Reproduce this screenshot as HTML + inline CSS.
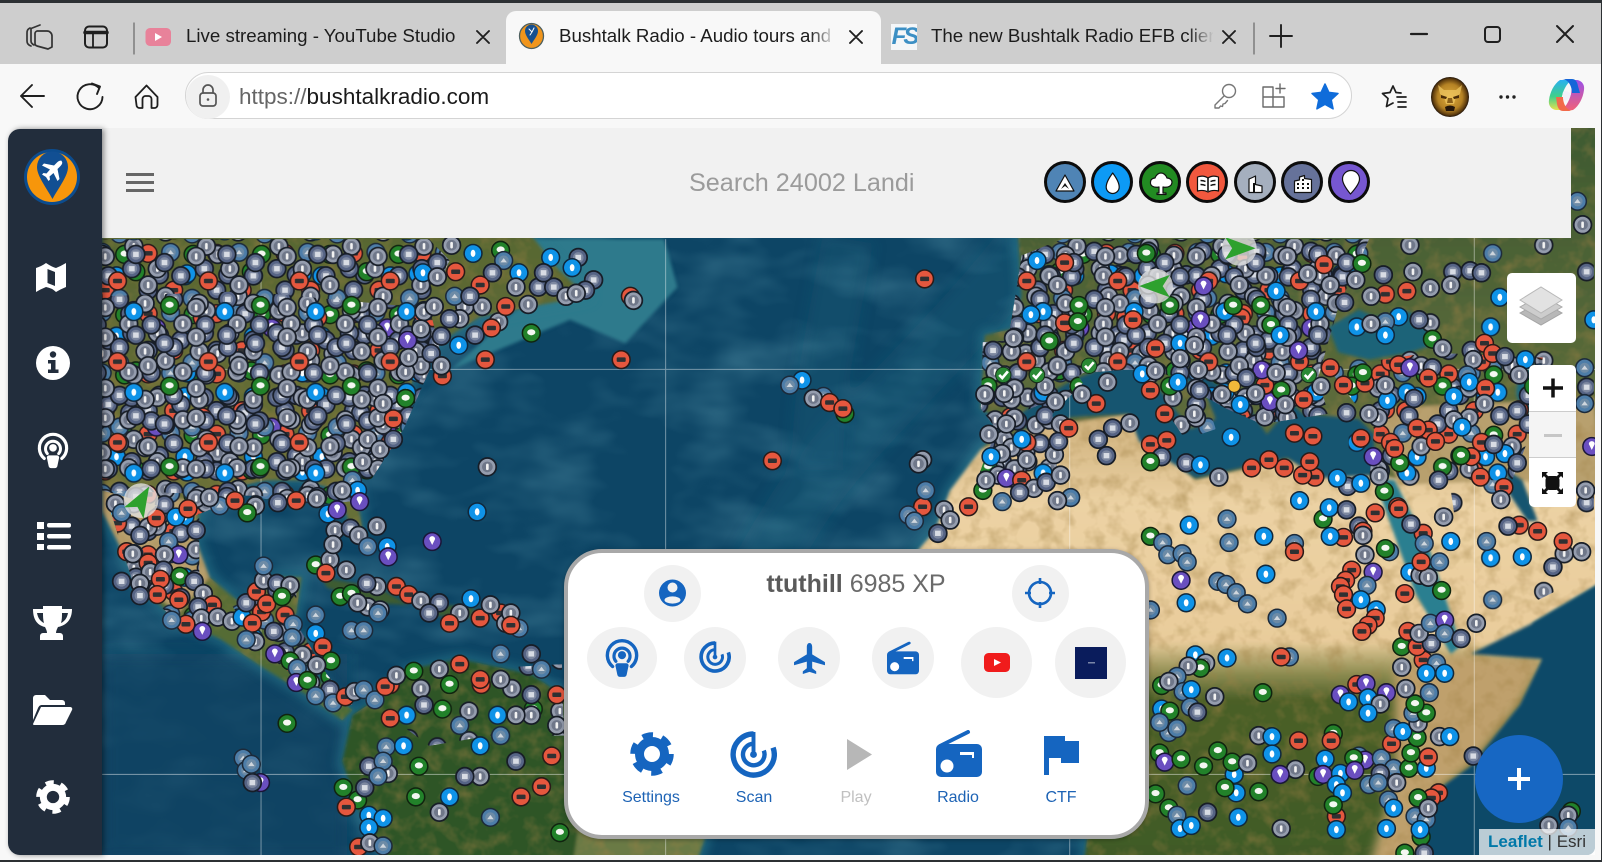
<!DOCTYPE html>
<html lang="en">
<head>
<meta charset="utf-8">
<title>Bushtalk Radio - Audio tours and</title>
<style>
html,body{margin:0;padding:0;width:1602px;height:862px;overflow:hidden;background:#2c3033;font-family:"Liberation Sans",sans-serif}
.a{position:absolute}
#win{left:0;top:3px;width:1601px;height:857px;background:#f8f8f8;border-radius:9px 9px 0 0;overflow:hidden}
#tabs{left:0;top:0;width:1601px;height:61px;background:#cecece}
#active{left:506px;top:8px;width:375px;height:53px;background:#f8f8f8;border-radius:10px 10px 0 0}
.tt{font-size:18.7px;color:#1c1c1c;white-space:nowrap;overflow:hidden;line-height:24px;top:21px}
#addr{left:185px;top:72px;width:1167px;height:47px;background:#fff;border:1.5px solid #d4d4d4;border-radius:25px;box-sizing:border-box}
#url{left:239px;top:83px;font-size:22.5px;line-height:28px;color:#666;white-space:nowrap}
#url b{font-weight:normal;color:#1a1a1a}
#map{left:102px;top:128px;width:1493px;height:727px;overflow:hidden;border-bottom-right-radius:8px}
#map svg{position:absolute;left:-102px;top:-128px}
#head{left:102px;top:128px;width:1469px;height:110px;background:#f1f1f1}
#side{left:8px;top:129px;width:94px;height:726px;background:#222d3c;border-radius:12px 0 0 12px;box-shadow:2px 0 6px rgba(0,0,0,.45)}
#search{left:689px;top:166px;width:225px;height:34px;font-size:25.2px;line-height:34px;color:#9b9b9b;white-space:nowrap;overflow:hidden}
.cat{width:36px;height:36px;border:3.5px solid #0c0c0c;border-radius:50%;top:161px}
.box{background:#fff;border-radius:5px}
#panel{left:564px;top:549px;width:585px;height:290px;background:#fff;border:4px solid #a8a8a8;border-radius:38px;box-sizing:border-box;box-shadow:0 1px 4px rgba(0,0,0,.3)}
#title{left:566px;width:580px;top:569px;text-align:center;font-size:25px;line-height:30px;color:#6a6a6a}
#title b{color:#5a5a5a}
.ci{background:#f1f1f1;border-radius:50%}
.lb{top:788px;width:100px;text-align:center;font-size:16px;line-height:20px;color:#1d63b5}
#fab{left:1475px;top:735px;width:88px;height:88px;border-radius:50%;background:#1767c3}
#attr{left:1479px;top:829px;width:116px;height:26px;background:rgba(255,255,255,.72);font-size:17px;line-height:26px;text-align:center;color:#333;white-space:nowrap}
#attr b{color:#0078a8}
</style>
</head>
<body>
<svg width="0" height="0" style="position:absolute">
<defs>
<g id="g"><circle r="8.700" fill="#959dae" stroke="#171d27" stroke-width="1.700"/><circle r="5.200" fill="#6f7789"/><rect x="-1.300" y="-3.200" width="2.600" height="6.400" rx="1.200" fill="#f2f2f2"/></g>
<g id="c"><circle r="8.700" fill="#566485" stroke="#171d27" stroke-width="1.700"/><circle r="5.200" fill="#7d88a0"/><rect x="-2.800" y="-2.600" width="5.600" height="5.200" fill="#d8dce4"/></g>
<g id="m"><circle r="8.700" fill="#4d7da8" stroke="#1c2a3a" stroke-width="1.500"/><circle r="5" fill="#6d8ba6"/><path d="M-3.200,1.800L0,-2.400L3.200,1.800Z" fill="#cfd6dd"/></g>
<g id="w"><circle r="8.700" fill="#0f93e8" stroke="#10283c" stroke-width="1.500"/><ellipse rx="2.300" ry="3.500" fill="#fff"/></g>
<g id="t"><circle r="8.700" fill="#22822a" stroke="#10240f" stroke-width="1.500"/><ellipse cy="-.8" rx="4" ry="3" fill="#f4f7f2"/></g>
<g id="r"><circle r="8.700" fill="#e5573e" stroke="#2a1a18" stroke-width="1.500"/><rect x="-4.400" y="-2.200" width="8.800" height="4.400" rx="1" fill="#2f3032"/></g>
<g id="p"><circle r="8.700" fill="#6a4fc0" stroke="#1a1638" stroke-width="1.500"/><path d="M-2.900,-2.400a2.900,2.900 0 1 1 5.800,0L0,3.400Z" fill="#fff"/></g>
<g id="k"><circle r="7.500" fill="#2a8a35" stroke="#15301a" stroke-width="1"/><path d="M-4,0L-1,3L4.500,-3.500" fill="none" stroke="#fff" stroke-width="2.600"/></g>

<pattern id="p1" width="67" height="59" patternUnits="userSpaceOnUse">
<use href="#r" x="11" y="12"/><use href="#m" x="33" y="11"/><use href="#t" x="55" y="13"/><use href="#c" x="22" y="33"/><use href="#w" x="47" y="34"/><use href="#c" x="11" y="48"/><use href="#r" x="36" y="48"/>
</pattern>
<pattern id="p2" width="71" height="63" patternUnits="userSpaceOnUse">
<use href="#g" x="12" y="11"/><use href="#c" x="35" y="18"/><use href="#c" x="58" y="11"/><use href="#g" x="20" y="38"/><use href="#m" x="46" y="40"/><use href="#g" x="60" y="52"/>
</pattern>
<pattern id="p3" width="89" height="79" patternUnits="userSpaceOnUse">
<use href="#g" x="14" y="14"/><use href="#c" x="44" y="12"/><use href="#c" x="72" y="20"/><use href="#r" x="26" y="38"/><use href="#g" x="56" y="42"/><use href="#t" x="77" y="62"/><use href="#g" x="14" y="64"/><use href="#w" x="42" y="68"/>
</pattern>
<pattern id="p4" width="113" height="97" patternUnits="userSpaceOnUse">
<use href="#p" x="40" y="30"/><use href="#r" x="85" y="20"/><use href="#t" x="20" y="72"/><use href="#w" x="70" y="74"/><use href="#g" x="100" y="55"/><use href="#c" x="14" y="16"/>
</pattern>
<pattern id="p5" width="53" height="47" patternUnits="userSpaceOnUse">
<use href="#c" x="11" y="11"/><use href="#g" x="36" y="15"/><use href="#g" x="20" y="35"/><use href="#c" x="42" y="36"/>
</pattern>
<pattern id="p6" width="131" height="113" patternUnits="userSpaceOnUse">
<use href="#m" x="20" y="22"/><use href="#g" x="70" y="14"/><use href="#c" x="112" y="40"/><use href="#r" x="46" y="62"/><use href="#g" x="90" y="90"/><use href="#w" x="18" y="94"/>
</pattern>

<symbol id="radar" viewBox="0 0 48 48"><path d="M24 3A21 21 0 1 0 44 17" fill="none" stroke="currentColor" stroke-width="5.500"/><path d="M24 13A11 11 0 1 0 34.500 20" fill="none" stroke="currentColor" stroke-width="4.500"/><path d="M24 1V24" stroke="currentColor" stroke-width="4"/><circle cx="24" cy="24" r="3.500" fill="currentColor"/></symbol>
<symbol id="radio" viewBox="0 0 46 47"><path d="M4 16L32 2" stroke="currentColor" stroke-width="4" stroke-linecap="round"/><rect y="14" width="46" height="33" rx="5" fill="currentColor"/><circle cx="11" cy="36" r="6.500" fill="#fff"/><path d="M24 22H38V28H36V25H24Z" fill="#fff"/></symbol>
<symbol id="pod" viewBox="0 0 36 42"><path d="M8 30A15.500 15.500 0 1 1 28 30" fill="none" stroke="currentColor" stroke-width="3.600" stroke-linecap="round"/><path d="M11.500 24.500A8.500 8.500 0 1 1 24.500 24.500" fill="none" stroke="currentColor" stroke-width="3.400" stroke-linecap="round"/><circle cx="18" cy="18" r="4.300" fill="currentColor"/><path d="M13.500 26.500H22.500A2.500 2.500 0 0 1 25 29L23 38.500A3 3 0 0 1 20 41H16A3 3 0 0 1 13 38.500L11 29A2.500 2.500 0 0 1 13.500 26.500Z" fill="currentColor"/></symbol>
<symbol id="gear" viewBox="0 0 44 44"><circle cx="22" cy="22" r="12.500" fill="none" stroke="currentColor" stroke-width="9"/><circle cx="22" cy="22" r="18.500" fill="none" stroke="currentColor" stroke-width="6.500" stroke-dasharray="10.400 9"/></symbol>
<filter id="b2" x="-10%" y="-10%" width="120%" height="120%"><feGaussianBlur stdDeviation="1.600"/></filter>
<filter id="b5" x="-10%" y="-10%" width="120%" height="120%"><feGaussianBlur stdDeviation="5"/></filter>
<filter id="b8" x="-20%" y="-20%" width="140%" height="140%"><feGaussianBlur stdDeviation="7"/></filter>
<filter id="nl" x="0" y="0" width="100%" height="100%"><feTurbulence type="fractalNoise" baseFrequency=".06" numOctaves="3" seed="7"/><feColorMatrix values="0 0 0 0 .35  0 0 0 0 .22  0 0 0 0 .06  1.100 0 0 0 -.5"/></filter>
<filter id="no" x="0" y="0" width="100%" height="100%"><feTurbulence type="fractalNoise" baseFrequency=".012 .024" numOctaves="3" seed="3"/><feColorMatrix values="0 0 0 0 .2  0 0 0 0 .5  0 0 0 0 .6  .6 0 0 0 -.26"/></filter>
<linearGradient id="afr" x1="0" y1="0" x2="0" y2="1"><stop offset="0" stop-color="#cdaf7a"/><stop offset=".2" stop-color="#ecd2a4"/><stop offset=".5" stop-color="#e9cc9b"/><stop offset=".57" stop-color="#8f8d52"/><stop offset=".63" stop-color="#4b5f28"/><stop offset="1" stop-color="#3f5a26"/></linearGradient>
<linearGradient id="eur" x1="0" y1="0" x2="0" y2="1"><stop offset="0" stop-color="#3e5a30"/><stop offset=".5" stop-color="#66713f"/><stop offset="1" stop-color="#9a8e5c"/></linearGradient>
<linearGradient id="nam" x1="0" y1="0" x2="0" y2="1"><stop offset="0" stop-color="#4f6230"/><stop offset=".6" stop-color="#6b7038"/><stop offset="1" stop-color="#486a35"/></linearGradient>
<path id="l1" d="M100,120L520,120L520,230L545,262L575,290L520,300L470,310L430,335L405,370L395,395L365,430L345,460L350,490L355,520L345,520L330,480L300,470L260,470L215,480L195,500L192,530L205,565L235,590L255,585L265,565L295,565L290,600L270,625L300,625L300,650L325,680L345,695L335,705L300,680L260,655L215,625L170,605L135,570L115,530L100,500Z"/>
<path id="l2" d="M345,700L375,680L400,655L450,645L520,660L565,690L620,720L680,760L700,790L680,850L385,850L350,790L335,745Z"/>
<path id="l3" d="M990,120L1568,120L1568,570L1500,610L1510,645L1488,690L1440,750L1412,770L1395,800L1390,850L1060,850L1065,815L900,780L800,700L800,600L880,560L915,520L930,480L960,440L985,415L960,400L964,328L990,322L1000,290Z"/>
<clipPath id="landc"><use href="#l1"/><use href="#l2"/><use href="#l3"/></clipPath>
<path id="ra" d="M100,234H420L440,255L420,300L430,340L395,420L350,490L300,495L240,485L190,505L100,480Z"/>
<path id="ra2" d="M100,290L240,285L400,300L425,340L390,420L350,490L240,485L100,480Z"/>
<path id="rc" d="M985,345L1000,250L1040,234H1340L1310,300L1290,370L1300,405L1235,415L1200,400L1130,360L1060,365L1020,395L985,410Z"/>
<path id="rc2" d="M962,335L1030,330L1060,375L1030,405L1035,465L990,478L958,465L975,420L960,400Z"/>
<path id="ri" d="M1110,350L1170,360L1190,420L1160,430L1130,385Z"/>
<path id="rd" d="M1300,360L1400,345L1510,350L1500,420L1480,470L1340,470L1345,420Z"/>
<path id="rm" d="M105,490L195,500L195,560L215,610L170,605L130,570Z"/>
<path id="rn" d="M225,590L270,570L290,570L290,610L320,660L345,690L325,690L260,640Z"/>
<path id="rs" d="M380,660L550,650L552,720L480,720L420,730L380,700Z"/>
</defs>
</svg>

<div class="a" id="win"></div>

<!-- MAP -->
<div class="a" id="map">
<svg width="1602" height="862" viewBox="0 0 1568 843.7" preserveAspectRatio="none">
<rect width="1568" height="844" fill="#0d4565"/>
<rect x="100" y="125" width="1468" height="719" filter="url(#no)"/>
<g filter="url(#b8)">
<path d="M1010,234C930,340 830,420 780,500S700,640 690,720" fill="none" stroke="#2a6f88" stroke-width="60" opacity=".22"/>
<path d="M830,234C815,320 800,380 800,460" fill="none" stroke="#2a7088" stroke-width="50" opacity=".2"/>
<rect x="100" y="640" width="240" height="200" fill="#0d4263" opacity=".7"/>
</g>
<path d="M520,234L650,234L663,281L612,336L558,313L441,362L400,400L520,290Z" fill="#2d7a8c" filter="url(#b2)"/>
<g fill="#2b7a8e" stroke="#2b7a8e" stroke-width="12" stroke-linejoin="round" filter="url(#b5)" opacity=".55">
<use href="#l1"/><use href="#l2"/><use href="#l3"/>
</g>
<g filter="url(#b2)">
<use href="#l1" fill="url(#nam)"/>
<path d="M100,480L190,490L192,530L205,565L175,600L135,570L115,530L100,500Z" fill="#b79e6c"/>
<path d="M315,565L370,575L400,592L360,590L320,575Z" fill="#3d5c30"/>
<path d="M415,590L465,595L460,605L420,602Z" fill="#3d5c30"/>
<use href="#l2" fill="#2f5428"/>
<path d="M580,720L680,760L700,790L680,850L560,850Z" fill="#6b7a45"/>
<use href="#l3" fill="url(#eur)"/>
<path d="M960,440L1010,420L1105,405L1170,470L1260,450L1345,465L1375,470L1475,460L1568,470L1568,570L1500,610L1510,645L1488,690L1440,750L1412,770L1395,800L1390,850L1060,850L1065,815L900,780L800,700L800,600L880,560L915,520L930,480Z" fill="url(#afr)"/>
<path d="M1340,400L1560,390L1568,480L1480,470L1370,475Z" fill="#b8a06e"/>
</g>
<path d="M1365,650L1430,640L1510,645L1488,690L1440,750L1412,770L1395,800L1390,850L1340,850L1365,760Z" fill="#bfa06c" filter="url(#b5)"/>
<g clip-path="url(#landc)"><rect x="100" y="125" width="1468" height="719" filter="url(#nl)"/></g>
<path d="M1500,610L1568,570L1568,844L1390,844L1395,800L1412,770L1440,750L1488,690L1510,645L1440,640Z" fill="#0e4a68" filter="url(#b2)"/>
<g filter="url(#b2)" fill="#125570">
<path d="M985,415L1020,390L1050,372L1100,352L1130,375L1165,420L1190,410L1180,385L1150,365L1175,365L1220,395L1240,425L1265,395L1275,405L1330,410L1345,425L1345,465L1290,468L1260,448L1215,458L1170,468L1115,432L1105,405L1050,408L1010,420Z"/>
<path d="M1300,320L1330,303L1345,310L1380,305L1410,335L1380,345L1340,352L1310,345Z" fill="#1a6478"/>
<path d="M1487,355L1500,365L1510,405L1490,405L1484,385Z" fill="#1c6a80"/>
<path d="M1345,468L1365,470L1400,540L1430,632L1420,640L1385,580Z" fill="#2a7f90"/>
<path d="M1475,460L1490,470L1505,510L1495,510L1475,480Z"/>
</g>
<g stroke="#fff" stroke-opacity=".42" stroke-width="1">
<path d="M255.500,234V844M651.500,234V844M1047,234V844M1443,125V844M100,361.500H1568M100,758H1568"/>
</g>

<!-- dense clusters -->
<g fill="url(#p6)"><path d="M1320,234H1560V480H1320Z"/><path d="M1420,480H1560V560L1440,620Z"/></g>
<g fill="url(#p1)"><use href="#ra"/><use href="#rc"/><use href="#rd"/><use href="#rm"/><use href="#rn"/></g>
<g fill="url(#p4)"><use href="#ra"/><use href="#rc"/><use href="#rc2"/></g>
<g fill="url(#p2)"><use href="#ra"/><use href="#rc"/><use href="#rc2"/><use href="#ri"/><use href="#rm"/><use href="#rn"/></g>
<g fill="url(#p5)"><use href="#ra2"/><use href="#rc"/><use href="#rc2"/></g>
<g fill="url(#p3)"><use href="#ra"/><use href="#rc"/><use href="#rc2"/><use href="#ri"/><use href="#rd"/><use href="#rm"/><use href="#rs"/></g>

<!-- US / Canada edge -->
<use href="#g" x="442" y="240"/><use href="#w" x="463" y="248"/><use href="#t" x="490" y="245"/><use href="#m" x="493" y="255"/><use href="#w" x="539" y="252"/><use href="#c" x="566" y="252"/><use href="#w" x="560" y="262"/><use href="#c" x="581" y="274"/><use href="#c" x="573" y="284"/><use href="#r" x="617" y="290"/><use href="#g" x="620" y="294"/><use href="#c" x="527" y="281"/><use href="#c" x="542" y="281"/><use href="#g" x="554" y="290"/><use href="#g" x="564" y="287"/><use href="#w" x="508" y="267"/><use href="#c" x="532" y="267"/><use href="#w" x="414" y="267"/><use href="#g" x="428" y="271"/><use href="#r" x="446" y="266"/><use href="#c" x="482" y="267"/><use href="#g" x="505" y="281"/><use href="#r" x="470" y="279"/><use href="#g" x="517" y="298"/><use href="#g" x="488" y="315"/><use href="#r" x="481" y="321"/><use href="#t" x="520" y="326"/><use href="#r" x="475" y="352"/><use href="#r" x="608" y="352"/><use href="#w" x="449" y="338"/><use href="#c" x="465" y="328"/><use href="#c" x="432" y="329"/><use href="#c" x="422" y="346"/><use href="#r" x="433" y="368"/><use href="#g" x="432" y="358"/><use href="#g" x="397" y="364"/><use href="#p" x="399" y="333"/><use href="#t" x="397" y="390"/><use href="#g" x="455" y="300"/><use href="#g" x="472" y="300"/><use href="#m" x="445" y="290"/><use href="#r" x="495" y="300"/><use href="#g" x="415" y="305"/><use href="#g" x="450" y="312"/><use href="#g" x="400" y="350"/><use href="#g" x="412" y="322"/><use href="#c" x="440" y="312"/><use href="#g" x="425" y="300"/><use href="#c" x="460" y="290"/><use href="#r" x="385" y="410"/><use href="#g" x="375" y="395"/><use href="#g" x="360" y="430"/><use href="#m" x="345" y="470"/><use href="#w" x="350" y="480"/><use href="#g" x="372" y="440"/><use href="#g" x="335" y="480"/><use href="#r" x="290" y="490"/><use href="#g" x="250" y="495"/><use href="#m" x="215" y="495"/><use href="#t" x="242" y="502"/><use href="#g" x="310" y="488"/><use href="#c" x="272" y="492"/><use href="#r" x="230" y="490"/><use href="#g" x="205" y="487"/><use href="#c" x="385" y="430"/><use href="#g" x="355" y="452"/>
<!-- Mexico / Central America -->
<use href="#g" x="113" y="493"/><use href="#m" x="119" y="502"/><use href="#r" x="153" y="507"/><use href="#w" x="172" y="506"/><use href="#r" x="184" y="498"/><use href="#c" x="192" y="519"/><use href="#c" x="137" y="524"/><use href="#m" x="165" y="530"/><use href="#r" x="124" y="540"/><use href="#g" x="130" y="542"/><use href="#p" x="175" y="543"/><use href="#g" x="161" y="543"/><use href="#r" x="145" y="551"/><use href="#g" x="147" y="560"/><use href="#c" x="160" y="558"/><use href="#t" x="176" y="564"/><use href="#c" x="190" y="569"/><use href="#r" x="157" y="567"/><use href="#c" x="119" y="569"/><use href="#g" x="137" y="571"/><use href="#r" x="154" y="582"/><use href="#c" x="137" y="583"/><use href="#g" x="199" y="581"/><use href="#r" x="175" y="587"/><use href="#r" x="208" y="592"/><use href="#c" x="194" y="594"/><use href="#g" x="197" y="605"/><use href="#g" x="213" y="604"/><use href="#r" x="182" y="611"/><use href="#m" x="168" y="607"/><use href="#p" x="198" y="618"/><use href="#g" x="227" y="608"/><use href="#w" x="237" y="604"/><use href="#c" x="241" y="590"/><use href="#r" x="251" y="579"/><use href="#r" x="256" y="599"/><use href="#r" x="261" y="591"/><use href="#r" x="247" y="610"/><use href="#g" x="258" y="568"/><use href="#c" x="271" y="571"/><use href="#g" x="284" y="573"/><use href="#m" x="258" y="554"/><use href="#t" x="276" y="584"/><use href="#m" x="309" y="602"/><use href="#m" x="287" y="611"/><use href="#m" x="286" y="624"/><use href="#w" x="309" y="620"/><use href="#r" x="316" y="633"/><use href="#t" x="324" y="647"/><use href="#g" x="310" y="651"/><use href="#p" x="269" y="640"/><use href="#c" x="268" y="618"/><use href="#g" x="250" y="628"/><use href="#m" x="241" y="626"/><use href="#t" x="284" y="647"/><use href="#m" x="291" y="654"/><use href="#p" x="290" y="668"/><use href="#t" x="301" y="666"/><use href="#c" x="323" y="675"/><use href="#m" x="309" y="681"/><use href="#m" x="326" y="688"/><use href="#r" x="338" y="682"/><use href="#g" x="347" y="677"/><use href="#m" x="356" y="675"/><use href="#m" x="367" y="685"/><use href="#r" x="382" y="703"/><use href="#r" x="377" y="672"/><use href="#g" x="388" y="661"/><use href="#m" x="378" y="731"/>
<!-- Caribbean -->
<use href="#t" x="309" y="553"/><use href="#g" x="323" y="548"/><use href="#r" x="319" y="561"/><use href="#g" x="339" y="558"/><use href="#w" x="321" y="503"/><use href="#p" x="330" y="499"/><use href="#p" x="352" y="491"/><use href="#g" x="328" y="519"/><use href="#c" x="343" y="517"/><use href="#g" x="351" y="524"/><use href="#m" x="360" y="535"/><use href="#w" x="379" y="535"/><use href="#p" x="380" y="545"/><use href="#g" x="369" y="515"/><use href="#g" x="326" y="533"/><use href="#t" x="333" y="584"/><use href="#t" x="344" y="581"/><use href="#g" x="360" y="594"/><use href="#g" x="372" y="597"/><use href="#g" x="369" y="574"/><use href="#c" x="359" y="571"/><use href="#r" x="388" y="574"/><use href="#m" x="344" y="617"/><use href="#m" x="356" y="617"/><use href="#r" x="400" y="582"/><use href="#c" x="430" y="590"/><use href="#g" x="450" y="600"/><use href="#w" x="461" y="586"/><use href="#r" x="490" y="600"/><use href="#m" x="508" y="615"/><use href="#c" x="520" y="640"/><use href="#w" x="467" y="501"/><use href="#p" x="423" y="530"/><use href="#g" x="477" y="457"/><use href="#g" x="412" y="588"/><use href="#r" x="470" y="605"/><use href="#g" x="495" y="610"/><use href="#t" x="281" y="708"/><use href="#c" x="420" y="600"/><use href="#r" x="440" y="610"/><use href="#g" x="480" y="592"/><use href="#g" x="500" y="600"/><use href="#m" x="370" y="600"/><use href="#g" x="350" y="590"/>
<use href="#m" x="238" y="742"/><use href="#m" x="241" y="754"/><use href="#p" x="255" y="766"/><use href="#c" x="247" y="766"/><use href="#m" x="246" y="748"/>
<!-- South America -->
<use href="#t" x="336" y="771"/><use href="#t" x="350" y="783"/><use href="#r" x="339" y="790"/><use href="#w" x="361" y="798"/><use href="#w" x="375" y="801"/><use href="#w" x="361" y="810"/><use href="#r" x="351" y="829"/><use href="#c" x="357" y="771"/><use href="#c" x="361" y="750"/><use href="#g" x="380" y="757"/><use href="#t" x="405" y="657"/><use href="#g" x="430" y="655"/><use href="#r" x="450" y="650"/><use href="#m" x="490" y="640"/><use href="#r" x="500" y="612"/><use href="#g" x="520" y="700"/><use href="#m" x="450" y="710"/><use href="#w" x="470" y="730"/><use href="#t" x="410" y="750"/><use href="#g" x="470" y="760"/><use href="#c" x="505" y="745"/><use href="#r" x="530" y="770"/><use href="#g" x="430" y="795"/><use href="#w" x="440" y="780"/><use href="#m" x="480" y="800"/><use href="#t" x="548" y="815"/><use href="#r" x="540" y="740"/><use href="#m" x="490" y="720"/><use href="#c" x="520" y="680"/><use href="#g" x="545" y="710"/><use href="#r" x="470" y="665"/><use href="#g" x="490" y="665"/><use href="#m" x="530" y="655"/><use href="#t" x="440" y="670"/><use href="#c" x="415" y="690"/><use href="#r" x="545" y="680"/><use href="#g" x="505" y="700"/><use href="#w" x="395" y="730"/><use href="#t" x="407" y="780"/><use href="#r" x="510" y="780"/><use href="#c" x="455" y="760"/><use href="#g" x="362" y="825"/><use href="#m" x="375" y="828"/><use href="#m" x="375" y="745"/><use href="#m" x="370" y="760"/>
<!-- Atlantic -->
<use href="#r" x="905" y="273"/><use href="#r" x="756" y="451"/><use href="#w" x="785" y="372"/><use href="#m" x="773" y="377"/><use href="#m" x="806" y="388"/><use href="#g" x="796" y="390"/><use href="#t" x="827" y="405"/><use href="#r" x="812" y="394"/><use href="#r" x="825" y="400"/><use href="#g" x="903" y="450"/><use href="#g" x="899" y="454"/>
<!-- Europe edge + Mediterranean -->
<use href="#c" x="972" y="343"/><use href="#g" x="992" y="331"/><use href="#g" x="983" y="385"/><use href="#g" x="964" y="386"/><use href="#g" x="980" y="444"/><use href="#w" x="970" y="447"/><use href="#g" x="977" y="465"/><use href="#p" x="985" y="468"/><use href="#m" x="981" y="491"/><use href="#t" x="962" y="480"/><use href="#c" x="918" y="522"/><use href="#r" x="948" y="496"/><use href="#r" x="903" y="496"/><use href="#g" x="924" y="499"/><use href="#g" x="930" y="509"/><use href="#m" x="906" y="480"/><use href="#m" x="889" y="504"/><use href="#m" x="895" y="510"/><use href="#g" x="968" y="425"/><use href="#g" x="985" y="415"/><use href="#w" x="1000" y="430"/><use href="#g" x="1005" y="450"/><use href="#g" x="1032" y="445"/><use href="#m" x="1048" y="487"/><use href="#g" x="1035" y="490"/><use href="#r" x="1000" y="470"/><use href="#g" x="1012" y="478"/><use href="#c" x="1024" y="472"/><use href="#g" x="1038" y="465"/><use href="#c" x="1036" y="432"/><use href="#g" x="1038" y="415"/><use href="#c" x="998" y="482"/><use href="#g" x="965" y="470"/>
<use href="#w" x="1009" y="308"/><use href="#w" x="1015" y="255"/><use href="#r" x="1042" y="257"/><use href="#t" x="1122" y="248"/><use href="#t" x="1207" y="299"/><use href="#p" x="1178" y="280"/><use href="#p" x="1175" y="313"/><use href="#r" x="1109" y="313"/><use href="#r" x="1042" y="316"/><use href="#t" x="1055" y="315"/><use href="#t" x="1027" y="334"/><use href="#w" x="1155" y="336"/><use href="#p" x="1271" y="343"/><use href="#t" x="1244" y="318"/><use href="#w" x="1249" y="285"/><use href="#w" x="1253" y="328"/><use href="#t" x="1333" y="258"/><use href="#r" x="1296" y="259"/><use href="#g" x="1280" y="268"/><use href="#g" x="1327" y="274"/><use href="#c" x="1354" y="269"/><use href="#g" x="1383" y="266"/><use href="#c" x="1439" y="265"/><use href="#c" x="1450" y="267"/><use href="#g" x="1400" y="282"/><use href="#g" x="1420" y="279"/><use href="#r" x="1377" y="285"/><use href="#g" x="1342" y="290"/><use href="#c" x="1316" y="296"/><use href="#w" x="1369" y="310"/><use href="#w" x="1468" y="291"/><use href="#c" x="1389" y="313"/><use href="#m" x="1356" y="315"/><use href="#g" x="1342" y="317"/><use href="#w" x="1356" y="328"/><use href="#t" x="1402" y="332"/><use href="#g" x="1412" y="341"/><use href="#c" x="1440" y="343"/><use href="#r" x="1453" y="336"/><use href="#r" x="1461" y="346"/><use href="#c" x="1473" y="349"/><use href="#g" x="1442" y="352"/><use href="#w" x="1493" y="352"/><use href="#r" x="1369" y="357"/><use href="#p" x="1380" y="360"/><use href="#c" x="1402" y="360"/><use href="#r" x="1398" y="370"/><use href="#g" x="1487" y="367"/><use href="#m" x="1436" y="367"/><use href="#w" x="1438" y="374"/><use href="#r" x="1454" y="380"/><use href="#g" x="1453" y="395"/><use href="#w" x="1423" y="388"/><use href="#r" x="1302" y="360"/><use href="#r" x="1336" y="375"/><use href="#r" x="1315" y="377"/><use href="#r" x="1276" y="391"/><use href="#c" x="1384" y="390"/><use href="#w" x="1358" y="392"/><use href="#g" x="1356" y="377"/><use href="#g" x="1340" y="405"/><use href="#r" x="1398" y="421"/><use href="#r" x="1387" y="419"/><use href="#r" x="1405" y="432"/><use href="#g" x="1423" y="411"/><use href="#w" x="1431" y="418"/><use href="#r" x="1440" y="447"/><use href="#t" x="1430" y="446"/><use href="#w" x="1473" y="444"/><use href="#c" x="1485" y="453"/><use href="#c" x="1462" y="435"/><use href="#c" x="1408" y="470"/><use href="#r" x="1449" y="467"/><use href="#r" x="1472" y="477"/><use href="#g" x="1469" y="489"/><use href="#c" x="1319" y="476"/><use href="#w" x="1332" y="473"/><use href="#t" x="1355" y="481"/><use href="#r" x="1368" y="496"/><use href="#g" x="1350" y="466"/><use href="#t" x="1370" y="453"/><use href="#p" x="1344" y="447"/><use href="#r" x="1365" y="439"/><use href="#r" x="1332" y="429"/><use href="#w" x="1309" y="468"/><use href="#r" x="1285" y="427"/><use href="#r" x="1267" y="424"/><use href="#r" x="1287" y="467"/><use href="#r" x="1257" y="458"/><use href="#r" x="1275" y="465"/><use href="#r" x="1225" y="458"/><use href="#r" x="1242" y="450"/><use href="#r" x="1282" y="452"/><use href="#g" x="1193" y="467"/><use href="#w" x="1205" y="428"/><use href="#c" x="1083" y="446"/><use href="#c" x="1075" y="430"/><use href="#g" x="1106" y="414"/><use href="#c" x="1089" y="419"/><use href="#r" x="1046" y="419"/><use href="#r" x="1126" y="435"/><use href="#r" x="1142" y="431"/><use href="#c" x="1137" y="447"/><use href="#t" x="1126" y="452"/><use href="#c" x="1161" y="453"/><use href="#w" x="1175" y="455"/><use href="#g" x="1169" y="405"/><use href="#r" x="1140" y="405"/><use href="#r" x="1073" y="395"/><use href="#g" x="1059" y="386"/><use href="#g" x="1084" y="374"/><use href="#w" x="1118" y="366"/><use href="#g" x="1131" y="363"/><use href="#w" x="1153" y="374"/><use href="#r" x="1126" y="382"/><use href="#c" x="1174" y="382"/><use href="#g" x="1196" y="386"/><use href="#w" x="1214" y="396"/><use href="#g" x="1238" y="408"/><use href="#p" x="1243" y="393"/><use href="#t" x="1254" y="382"/><use href="#g" x="1258" y="396"/><use href="#r" x="1238" y="377"/><use href="#g" x="1229" y="385"/><use href="#g" x="1293" y="378"/><use href="#c" x="1318" y="404"/><use href="#t" x="1334" y="365"/><use href="#p" x="1235" y="362"/><use href="#g" x="1249" y="365"/><use href="#c" x="1220" y="370"/><use href="#g" x="1173" y="362"/><use href="#g" x="1155" y="351"/><use href="#g" x="1169" y="338"/><use href="#r" x="1131" y="341"/><use href="#g" x="1023" y="378"/><use href="#g" x="1033" y="393"/><use href="#k" x="1015" y="367"/><use href="#k" x="1066" y="358"/><use href="#k" x="1281" y="367"/><use href="#k" x="982" y="367"/><circle cx="1208" cy="378" r="6" fill="#f1b93a" stroke="#222"/>
<use href="#m" x="1544" y="197"/><use href="#g" x="1549" y="220"/><use href="#m" x="1551" y="360"/><use href="#w" x="1560" y="313"/><use href="#m" x="1551" y="395"/><use href="#p" x="1558" y="437"/><use href="#g" x="1552" y="480"/>
<!-- Africa -->
<use href="#t" x="1126" y="525"/><use href="#m" x="1138" y="531"/><use href="#m" x="1143" y="543"/><use href="#m" x="1157" y="542"/><use href="#m" x="1162" y="550"/><use href="#w" x="1164" y="514"/><use href="#m" x="1201" y="508"/><use href="#m" x="1203" y="531"/><use href="#w" x="1237" y="525"/><use href="#m" x="1267" y="532"/><use href="#r" x="1267" y="540"/><use href="#w" x="1239" y="562"/><use href="#p" x="1156" y="568"/><use href="#m" x="1192" y="569"/><use href="#m" x="1200" y="572"/><use href="#m" x="1210" y="580"/><use href="#m" x="1221" y="591"/><use href="#w" x="1161" y="590"/><use href="#m" x="1126" y="597"/><use href="#m" x="1250" y="605"/><use href="#w" x="1201" y="644"/><use href="#m" x="1262" y="643"/><use href="#r" x="1254" y="643"/><use href="#w" x="1170" y="641"/><use href="#g" x="1180" y="649"/><use href="#t" x="1175" y="654"/><use href="#g" x="1163" y="652"/><use href="#m" x="1152" y="662"/><use href="#t" x="1137" y="671"/><use href="#g" x="1144" y="667"/><use href="#m" x="1158" y="677"/><use href="#w" x="1166" y="675"/><use href="#g" x="1189" y="682"/><use href="#t" x="1236" y="678"/><use href="#m" x="1165" y="692"/><use href="#c" x="1172" y="697"/><use href="#w" x="1137" y="694"/><use href="#t" x="1145" y="696"/><use href="#m" x="1144" y="717"/><use href="#m" x="1135" y="707"/><use href="#m" x="1152" y="713"/><use href="#g" x="1232" y="720"/><use href="#w" x="1245" y="721"/><use href="#r" x="1271" y="725"/><use href="#t" x="1192" y="735"/><use href="#w" x="1245" y="738"/><use href="#t" x="1135" y="737"/><use href="#p" x="1140" y="746"/><use href="#t" x="1156" y="743"/><use href="#t" x="1178" y="750"/><use href="#w" x="1208" y="758"/><use href="#t" x="1206" y="746"/><use href="#g" x="1221" y="747"/><use href="#g" x="1268" y="753"/><use href="#p" x="1253" y="758"/><use href="#m" x="1162" y="769"/><use href="#w" x="1210" y="776"/><use href="#t" x="1199" y="771"/><use href="#t" x="1232" y="775"/><use href="#t" x="1131" y="777"/><use href="#t" x="1144" y="791"/><use href="#m" x="1152" y="798"/><use href="#c" x="1182" y="795"/><use href="#w" x="1155" y="811"/><use href="#w" x="1166" y="808"/><use href="#w" x="1212" y="800"/><use href="#g" x="1254" y="811"/>
<use href="#t" x="1305" y="718"/><use href="#r" x="1303" y="725"/><use href="#t" x="1290" y="760"/><use href="#w" x="1297" y="743"/><use href="#p" x="1295" y="758"/><use href="#w" x="1312" y="757"/><use href="#w" x="1308" y="768"/><use href="#w" x="1314" y="776"/><use href="#r" x="1308" y="799"/><use href="#t" x="1305" y="788"/><use href="#w" x="1308" y="812"/><use href="#m" x="1330" y="740"/><use href="#p" x="1336" y="744"/><use href="#t" x="1325" y="742"/><use href="#p" x="1326" y="754"/><use href="#m" x="1340" y="768"/><use href="#m" x="1352" y="742"/><use href="#m" x="1364" y="752"/><use href="#c" x="1351" y="757"/><use href="#m" x="1349" y="766"/><use href="#g" x="1367" y="766"/><use href="#t" x="1379" y="752"/><use href="#w" x="1396" y="752"/><use href="#t" x="1381" y="737"/><use href="#t" x="1387" y="722"/><use href="#g" x="1409" y="721"/><use href="#w" x="1419" y="721"/><use href="#r" x="1398" y="741"/><use href="#r" x="1362" y="728"/><use href="#m" x="1364" y="713"/><use href="#w" x="1373" y="716"/><use href="#g" x="1388" y="708"/><use href="#m" x="1383" y="698"/><use href="#t" x="1396" y="698"/><use href="#t" x="1385" y="689"/><use href="#m" x="1399" y="678"/><use href="#g" x="1376" y="674"/><use href="#g" x="1372" y="653"/><use href="#r" x="1393" y="646"/><use href="#m" x="1406" y="649"/><use href="#w" x="1396" y="659"/><use href="#w" x="1414" y="659"/><use href="#t" x="1372" y="633"/><use href="#r" x="1387" y="633"/><use href="#c" x="1401" y="630"/><use href="#r" x="1378" y="618"/><use href="#g" x="1389" y="620"/><use href="#m" x="1400" y="610"/><use href="#p" x="1414" y="607"/><use href="#m" x="1414" y="620"/>
<use href="#w" x="1380" y="560"/><use href="#g" x="1390" y="563"/><use href="#g" x="1398" y="565"/><use href="#r" x="1375" y="581"/><use href="#t" x="1411" y="578"/><use href="#r" x="1391" y="550"/><use href="#m" x="1409" y="550"/><use href="#r" x="1393" y="522"/><use href="#m" x="1394" y="532"/><use href="#c" x="1381" y="513"/><use href="#g" x="1413" y="506"/>
<use href="#m" x="1360" y="540"/><use href="#t" x="1356" y="537"/><use href="#p" x="1344" y="560"/><use href="#c" x="1330" y="515"/><use href="#r" x="1334" y="520"/><use href="#g" x="1334" y="524"/><use href="#g" x="1336" y="543"/><use href="#m" x="1338" y="573"/><use href="#r" x="1323" y="558"/><use href="#r" x="1317" y="568"/><use href="#r" x="1312" y="574"/><use href="#r" x="1315" y="582"/><use href="#r" x="1318" y="596"/><use href="#w" x="1347" y="597"/><use href="#r" x="1346" y="605"/><use href="#w" x="1332" y="587"/><use href="#r" x="1339" y="612"/><use href="#r" x="1333" y="618"/><use href="#r" x="1315" y="526"/><use href="#w" x="1302" y="525"/><use href="#t" x="1295" y="508"/><use href="#w" x="1301" y="497"/><use href="#c" x="1318" y="499"/><use href="#r" x="1346" y="502"/><use href="#r" x="1369" y="498"/><use href="#r" x="1328" y="670"/><use href="#p" x="1337" y="669"/><use href="#p" x="1312" y="680"/><use href="#w" x="1320" y="687"/><use href="#w" x="1339" y="683"/><use href="#p" x="1357" y="678"/><use href="#g" x="1351" y="689"/><use href="#w" x="1339" y="698"/><use href="#w" x="1272" y="490"/>
<use href="#w" x="1357" y="811"/><use href="#r" x="1408" y="776"/><use href="#r" x="1401" y="781"/><use href="#t" x="1388" y="781"/><use href="#m" x="1359" y="783"/><use href="#w" x="1364" y="791"/><use href="#m" x="1385" y="799"/><use href="#m" x="1396" y="802"/><use href="#t" x="1391" y="819"/><use href="#w" x="1390" y="812"/><use href="#t" x="1375" y="835"/><use href="#c" x="1394" y="835"/><use href="#g" x="1398" y="791"/><use href="#c" x="1442" y="740"/><use href="#t" x="1538" y="794"/><use href="#g" x="1535" y="798"/><use href="#m" x="1535" y="810"/><use href="#g" x="1516" y="808"/>
<use href="#c" x="1430" y="625"/><use href="#g" x="1445" y="610"/><use href="#w" x="1420" y="530"/><use href="#m" x="1455" y="530"/><use href="#w" x="1490" y="545"/><use href="#c" x="1476" y="515"/><use href="#r" x="1530" y="530"/><use href="#r" x="1505" y="520"/><use href="#g" x="1548" y="540"/><use href="#c" x="1520" y="555"/>
<!-- aircraft -->
<g transform="translate(138,490)"><circle r="17" fill="#e4e4e4" fill-opacity=".78"/><path d="M-16,0L14,-11L7,0L14,11Z" fill="#2ea12e" transform="rotate(120)"/></g>
<g transform="translate(1131,280)"><circle r="17" fill="#e4e4e4" fill-opacity=".78"/><path d="M-16,0L14,-11L7,0L14,11Z" fill="#2ea12e"/></g>
<g transform="translate(1213,243)"><circle r="17" fill="#e4e4e4" fill-opacity=".78"/><path d="M16,0L-14,-11L-7,0L-14,11Z" fill="#2ea12e"/></g>
</svg>
</div>

<!-- BROWSER CHROME -->
<div class="a" id="tabs" style="top:3px"></div>
<div class="a" id="active" style="top:11px"></div>
<div class="a" style="left:0;top:64px;width:1601px;height:64px;background:#f8f8f8"></div>
<div class="a" id="addr"></div>
<div class="a" style="left:186px;top:75px;width:44px;height:44px;background:#f0f0f0;border-radius:50%"></div>
<div class="a" id="url">https://<b>bushtalkradio.com</b></div>

<div class="a tt" style="left:186px;top:24px;width:272px">Live streaming - YouTube Studio</div>
<div class="a tt" style="left:559px;top:24px;width:276px">Bushtalk Radio - Audio tours and</div>
<div class="a" style="left:810px;top:22px;width:26px;height:28px;background:linear-gradient(90deg,rgba(248,248,248,0),#f8f8f8)"></div>
<div class="a tt" style="left:931px;top:24px;width:282px">The new Bushtalk Radio EFB client</div>
<div class="a" style="left:1188px;top:22px;width:26px;height:28px;background:linear-gradient(90deg,rgba(206,206,206,0),#cecece)"></div>
<div class="a" style="left:891px;top:24px;width:26px;height:26px;background:#f4f6f8;font:italic bold 24px/26px 'Liberation Sans',sans-serif;color:#3c8fc4;letter-spacing:-3px;overflow:hidden;text-align:center">FS</div>

<svg class="a" style="left:0;top:0" width="1602" height="130" viewBox="0 0 1602 130" fill="none" stroke="#1f1f1f" stroke-width="1.700" stroke-linecap="round" stroke-linejoin="round">
<path d="M37 31h10a5 5 0 0 1 5 5v11l-4 2-11-3a3 3 0 0 1-2-3V34a3 3 0 0 1 2-3Z" stroke="#333"/>
<path d="M31 28.500l9-3.500M27 33c0-3 1-4 3-5M31 46c-3-1-4-3-4-5v-8" stroke="#333"/>
<path d="M31 29v12c0 2 1 3 3 4" stroke="#333"/>
<rect x="85" y="26.500" width="22" height="21" rx="4" stroke-width="2"/><path d="M85 32.500h22" stroke-width="3.500"/><path d="M93 33v14" stroke-width="1.800"/>
<path d="M134 23v31M1254 23v31" stroke="#6e6e6e" stroke-width="1.300"/>
<rect x="145.500" y="28" width="25.500" height="18" rx="4.500" fill="#e8829a" stroke="none"/><path d="M155 33l7 4-7 4Z" fill="#fff" stroke="none"/>
<path d="M477 31l12 12M489 31l-12 12M850 31l12 12M862 31l-12 12M1223 31l12 12M1235 31l-12 12" stroke-width="1.900"/>
<path d="M1270 36h22M1281 25v22" stroke-width="1.900"/>
<ellipse cx="531.500" cy="36" rx="12" ry="12.500" fill="#f0951c" stroke="#4d5f5f" stroke-width="1.300"/>
<path d="M525 31a6.500 6.500 0 0 1 13 0c0 4-3.500 8-6.500 13c-3-5-6.500-9-6.500-13Z" fill="#17508f" stroke="none"/>
<path d="M529 29l3 3-2 3M534 28l-2 4" stroke="#fff" stroke-width="1"/>
<path d="M1411 34h16" stroke-width="2.200"/><rect x="1485" y="27" width="15" height="15" rx="3" stroke-width="2"/><path d="M1557 26l16 16M1573 26l-16 16" stroke-width="2"/>
<path d="M21 96h23M32 85L21 96l11 11" stroke-width="1.900"/>
<path d="M99 88a12.500 12.500 0 1 0 3.500 9" stroke-width="1.900"/><path d="M92 83.500l8 3-3 7.500" stroke-width="1.900"/>
<path d="M135.500 97L146.500 85.500 157.500 97V105a3 3 0 0 1-3 3h-3v-9a3 3 0 0 0-3-3h-3a3 3 0 0 0-3 3v9h-3a3 3 0 0 1-3-3Z" stroke-width="1.800"/>
<rect x="200" y="93" width="16" height="13" rx="3" stroke="#555"/><path d="M203 93v-3a5 5 0 0 1 10 0v3" stroke="#555"/><circle cx="208" cy="99.500" r="1.300" fill="#555" stroke="none"/>
<circle cx="1229" cy="91" r="6.500" stroke="#777" stroke-width="1.400"/><path d="M1224 96l-9 9v3h4l1.500-2 2 .5.5-2.500 2-.5 2.500-3" stroke="#777" stroke-width="1.400"/>
<path d="M1263 87h10v20h-10ZM1273 97h11v10h-11ZM1263 97h10" stroke="#6a6a6a" stroke-width="1.400"/><path d="M1280 84v9M1276 88.500h9" stroke="#6a6a6a" stroke-width="1.400"/>
<path d="M1325 84l3.900 8.400 9.100 1.100-6.800 6.200 1.900 9.200-8.100-4.600-8.100 4.600 1.900-9.200-6.800-6.200 9.100-1.100Z" fill="#0f6cda" stroke="#0f6cda" stroke-width="1.500"/>
<path d="M1393 86l3 6.500 5 .5M1393 86l-3 6.500-7.500 1 5.500 5-1.500 8 6.500-3.500" stroke-width="1.700"/><path d="M1397 97h9M1398 102h8M1398 107h8" stroke-width="1.700"/>
<circle cx="1501" cy="97" r="1.700" fill="#222" stroke="none"/><circle cx="1507.500" cy="97" r="1.700" fill="#222" stroke="none"/><circle cx="1514" cy="97" r="1.700" fill="#222" stroke="none"/>
</svg>
<svg class="a" style="left:1429px;top:76px" width="42" height="42" viewBox="0 0 42 42">
<defs><radialGradient id="av"><stop offset="0" stop-color="#e0ad3e"/><stop offset=".65" stop-color="#b58224"/><stop offset=".9" stop-color="#5e3c0e"/><stop offset="1" stop-color="#20140a"/></radialGradient></defs>
<ellipse cx="21" cy="21" rx="19" ry="20" fill="url(#av)"/>
<path d="M9 9l6 5h12l6-5-2 9-4 3-2 7h-8l-2-7-4-3Z" fill="#eec560" opacity=".75"/>
<path d="M12 19l6 2-1 2-5-1ZM30 19l-6 2 1 2 5-1Z" fill="#4a2c08"/>
<path d="M16 31q5-3 10 0l-1 4h-8Z" fill="#24160a"/>
<path d="M19 22h4l1 5h-6Z" fill="#8a5f18"/>
</svg>
<svg class="a" style="left:1548px;top:78px" width="37" height="34" viewBox="0 0 37 34">
<defs>
<linearGradient id="co2" x1="0" y1="0" x2="0" y2="1"><stop offset="0" stop-color="#2ab0f0"/><stop offset=".55" stop-color="#3fd08a"/><stop offset="1" stop-color="#e8e050"/></linearGradient>
<linearGradient id="co3" x1="0" y1="0" x2="0" y2="1"><stop offset="0" stop-color="#9a50e8"/><stop offset="1" stop-color="#f0607a"/></linearGradient>
</defs>
<path d="M12 2H24C20 4 16 10 14 18C13 24 13 28 16 32H9C4 32 0 28 1 22C2 14 6 6 12 2Z" fill="url(#co2)"/>
<path d="M25 32H13C17 30 21 24 23 16C24 10 24 6 21 2H28C33 2 37 6 36 12C35 20 31 28 25 32Z" fill="url(#co3)"/>
<path d="M14 1H24C27 1 29 3 30 8L32 15H24C24 8 20 1 14 1Z" fill="#1666d8"/>
<path d="M23 33H13C10 33 8 31 7 26L6 19H13C13 26 17 33 23 33Z" fill="#f26a4a" transform="translate(2,0)"/>
<path d="M15 14C18 12 21 14 23 16C22 20 20 22 17 23C15 21 14 17 15 14Z" fill="#f2f0fa"/>
</svg>

<!-- HEADER -->
<div class="a" id="head"></div>
<div class="a" style="left:126px;top:173px;width:28px;height:3px;background:#666"></div>
<div class="a" style="left:126px;top:181px;width:28px;height:3px;background:#666"></div>
<div class="a" style="left:126px;top:189px;width:28px;height:3px;background:#666"></div>
<div class="a" id="search">Search 24002 Landi</div>

<div class="a cat" style="left:1044px;background:#4f84b5"></div>
<div class="a cat" style="left:1091px;background:#0d9af5"></div>
<div class="a cat" style="left:1139px;background:#228b22"></div>
<div class="a cat" style="left:1186px;background:#f2583e"></div>
<div class="a cat" style="left:1234px;background:#a5afbe"></div>
<div class="a cat" style="left:1281px;background:#66729a"></div>
<div class="a cat" style="left:1328px;background:#7657d0"></div>
<svg class="a" style="left:1040px;top:158px" width="340" height="50" viewBox="0 0 340 50" fill="#fff" stroke="#111" stroke-width="1.200" stroke-linejoin="round">
<path d="M16 33L25 17 34 33Z"/><path d="M21 31L25 25 29 31 25 28Z" fill="#111" stroke="none"/>
<path d="M72.700 15c4.500 6 6.500 10 6.500 14a6.500 6.500 0 0 1-13 0c0-4 2-8 6.500-14Z"/>
<path d="M119 35v-6c-5 1-9-1-8.500-5 0-3 3-4 4.500-4 1-3 3.500-5 6-5s5 2 6 5c2 0 5 1.500 5 4 0 4-4 6-9 5v6h3v1.500h-9V35Z"/>
<path d="M157.500 19c4-1.500 7-1.500 10.500 1 3.500-2.500 6.500-2.500 10.500-1v14c-4-1-7-1-10.500 1-3.500-2-6.500-2-10.500-1Z"/><path d="M168 20v13" stroke-width="1.600"/><path d="M160.500 22.500c2 0 3.500 .3 5 1M160.500 26.500c2 0 3.500 .3 5 1M170.500 23.500c1.500-.7 3-1 5-1M170.500 27.500c1.500-.7 3-1 5-1" stroke-width="1.500"/>
<path d="M209 34.500V21l3.500-1.500L215.500 18v8.500L222 28v6.500Z"/><path d="M213 34V25h2v9Z" fill="#111" stroke="none"/>
<path d="M254.500 34.500V23l5-1v-3l5-1.500v3l7 1v13Z"/><path d="M257 25h2v2h-2ZM257 29h2v2h-2ZM262 21h2v2h-2ZM262 25h2v2h-2ZM262 29h2v2h-2ZM267 25h2v2h-2ZM267 29h2v2h-2Z" fill="#111" stroke="none"/>
<path d="M310.500 36c-5-6-8-11-8-15a8.500 8.500 0 0 1 17 0c0 4-3.500 9-9 15Z"/>
</svg>

<!-- SIDEBAR -->
<div class="a" id="side"></div>
<svg class="a" style="left:8px;top:129px" width="94" height="726" viewBox="8 129 94 726" fill="#fff">
<circle cx="52" cy="177" r="28" fill="#0c4c8e"/><circle cx="52" cy="177" r="25" fill="#f7960b"/>
<path d="M37 167a15.500 15.500 0 0 1 31 0c0 9-9 20-15.500 32C46 187 37 176 37 167Z" fill="#114f93"/>
<path d="M62 161c-1.500-1-3.500 0-5 1.500l-3 3-10-2-2 2 8 4-3.500 4-3-.5-1.500 1.500 4 2.500 2.500 4 1.500-1.500-.5-3 4-3.500 4 8 2-2-2-10 3-3c1.500-1.500 2.500-3.500 1-5Z"/>
<path d="M36 268Q42 266 46 263Q52 267 56 268Q61 266 66 263V287Q61 289 56 292Q52 288 46 287Q41 289 36 292Z"/><path d="M47.500 269L55 272V286L47.500 283Z" fill="#222d3c"/>
<circle cx="53" cy="363" r="17"/><circle cx="53" cy="354.500" r="3.200" fill="#222d3c"/><path d="M48 360h7.500v9.500H58.500v3.500H48v-3.500h3v-6h-3Z" fill="#222d3c"/>
<svg x="37" y="432" width="32" height="37" viewBox="0 0 36 42" style="color:#fff"><use href="#pod"/></svg>
<path d="M37 522h7v7h-7ZM37 533h7v7h-7ZM37 544h7v6h-7Z"/><rect x="47" y="523" width="24" height="4.500" rx="2"/><rect x="47" y="534" width="24" height="4.500" rx="2"/><rect x="47" y="545" width="24" height="4.500" rx="2"/>
<path d="M43 606h19c0 0 0 2 0 3h10c0 9-4 16-14 18-1 2-2 4-2 6h4a3 3 0 0 1 3 3v4H40v-4a3 3 0 0 1 3-3h4c0-2-1-4-2-6-9-2-12-9-12-18h10c0-1 0-3 0-3Zm-6 7c1 5 3 8 7 10-1-3-1-7-1-10Zm25 0c0 3 0 7-1 10 4-2 6-5 7-10Z" fill-rule="evenodd"/>
<path d="M33 698a3 3 0 0 1 3-3h9l5 5h12a3 3 0 0 1 3 3v2H42c-2 0-3 1-4 3l-5 12Z"/><path d="M41 707h29a2 2 0 0 1 2 3l-6 12a4 4 0 0 1-4 3H34a1 1 0 0 1-1-1Z"/>
<svg x="36" y="780" width="34" height="34" viewBox="0 0 44 44" style="color:#fff"><use href="#gear"/></svg>
</svg>

<!-- RIGHT CONTROLS -->
<div class="a box" style="left:1507px;top:273px;width:69px;height:70px"></div>
<svg class="a" style="left:1518px;top:284px" width="46" height="48" viewBox="0 0 46 48">
<path d="M2 29L23 17 44 29 23 41Z" fill="#b8b8b8" stroke="#a5a5a5"/><path d="M2 23L23 11 44 23 23 35Z" fill="#cdcdcd" stroke="#aaa"/><path d="M2 16L23 3 44 16 23 29Z" fill="#e2e2e2" stroke="#b8b8b8"/>
</svg>
<div class="a box" style="left:1529px;top:365px;width:47px;height:142px;overflow:hidden">
<div class="a" style="left:0;top:46px;width:47px;height:47px;background:#f4f4f4;border-top:1px solid #ccc;border-bottom:1px solid #ccc;box-sizing:border-box"></div>
</div>
<svg class="a" style="left:1529px;top:365px" width="47" height="142" viewBox="0 0 47 142">
<path d="M14 23h20M24 13.500v19" stroke="#111" stroke-width="3.500"/><path d="M15 70.500h18" stroke="#c6c6c6" stroke-width="3"/>
<rect x="16.500" y="111" width="14" height="14" rx="4" fill="#111"/>
<path d="M13 107l6 0-2 2 3 3-2 2-3-3-2 2ZM34 107l0 6-2-2-3 3-2-2 3-3-2-2ZM13 129l0-6 2 2 3-3 2 2-3 3 2 2ZM34 129l-6 0 2-2-3-3 2-2 3 3 2-2Z" fill="#111"/>
</svg>

<!-- PANEL -->
<div class="a" id="panel"></div>
<div class="a" id="title"><b>ttuthill</b> 6985 XP</div>
<div class="a ci" style="left:644px;top:565px;width:57px;height:57px"></div>
<div class="a ci" style="left:1012px;top:565px;width:57px;height:57px"></div>
<div class="a ci" style="left:587px;top:627px;width:70px;height:62px;border-radius:50%"></div>
<div class="a ci" style="left:684px;top:627px;width:62px;height:62px"></div>
<div class="a ci" style="left:778px;top:627px;width:62px;height:62px"></div>
<div class="a ci" style="left:872px;top:627px;width:62px;height:62px"></div>
<div class="a ci" style="left:961px;top:627px;width:71px;height:71px"></div>
<div class="a ci" style="left:1055px;top:627px;width:71px;height:71px"></div>
<svg class="a" style="left:560px;top:540px;color:#1565c0" width="600" height="310" viewBox="560 540 600 310" fill="#1565c0">
<circle cx="672.500" cy="593" r="13.500"/><circle cx="672.500" cy="587.500" r="5" fill="#f1f1f1"/><ellipse cx="672.500" cy="600" rx="8" ry="3.600" fill="#f1f1f1"/>
<circle cx="1040" cy="593" r="11" fill="none" stroke="#1565c0" stroke-width="2.600"/><path d="M1040 578v6M1040 602v6M1025 593h6M1049 593h6" stroke="#1565c0" stroke-width="2.600"/>
<svg x="605" y="638" width="34" height="40" viewBox="0 0 36 42"><use href="#pod"/></svg>
<svg x="699" y="641" width="32" height="32" viewBox="0 0 48 48"><use href="#radar"/></svg>
<svg x="793" y="642" width="33" height="33" viewBox="0 0 32 32"><path d="M16 1c-1.600 0-2.600 1.600-2.600 4v7L1 19.500v3L13.400 19v6.500L9.500 28.500V31l6.500-2 6.500 2v-2.500l-3.900-3V19L31 22.500v-3L18.600 12V5C18.600 2.600 17.600 1 16 1Z"/></svg>
<svg x="887" y="641" width="32" height="34" viewBox="0 0 46 47"><use href="#radio"/></svg>
<rect x="984" y="653" width="26" height="19" rx="4.500" fill="#f01c1c"/><path d="M994 659l7 3.500-7 3.500Z" fill="#fff"/>
<rect x="1075" y="647" width="32" height="32" fill="#0a1c5c"/><rect x="1088" y="662" width="7" height="1.500" fill="#7a86a8"/>
<svg x="630" y="732" width="44" height="44" viewBox="0 0 44 44"><use href="#gear"/></svg>
<svg x="730" y="731" width="47" height="47" viewBox="0 0 48 48"><use href="#radar"/></svg>
<path d="M847 739l25 15.500-25 15.500Z" fill="#b7b7b7"/>
<svg x="936" y="730" width="46" height="47" viewBox="0 0 46 47"><use href="#radio"/></svg>
<path d="M1044 736H1065V741H1079V763H1061V758H1049V775H1044Z"/>
</svg>
<div class="a lb" style="left:601px">Settings</div>
<div class="a lb" style="left:704px">Scan</div>
<div class="a lb" style="left:806px;color:#c0c0c0">Play</div>
<div class="a lb" style="left:908px">Radio</div>
<div class="a lb" style="left:1011px">CTF</div>

<!-- FAB + ATTRIBUTION -->
<div class="a" id="fab"></div>
<div class="a" style="left:1508px;top:777px;width:22px;height:3.500px;background:#fff"></div>
<div class="a" style="left:1517px;top:768px;width:3.500px;height:22px;background:#fff"></div>
<div class="a" id="attr"><b>Leaflet</b> | Esri</div>
</body>
</html>
